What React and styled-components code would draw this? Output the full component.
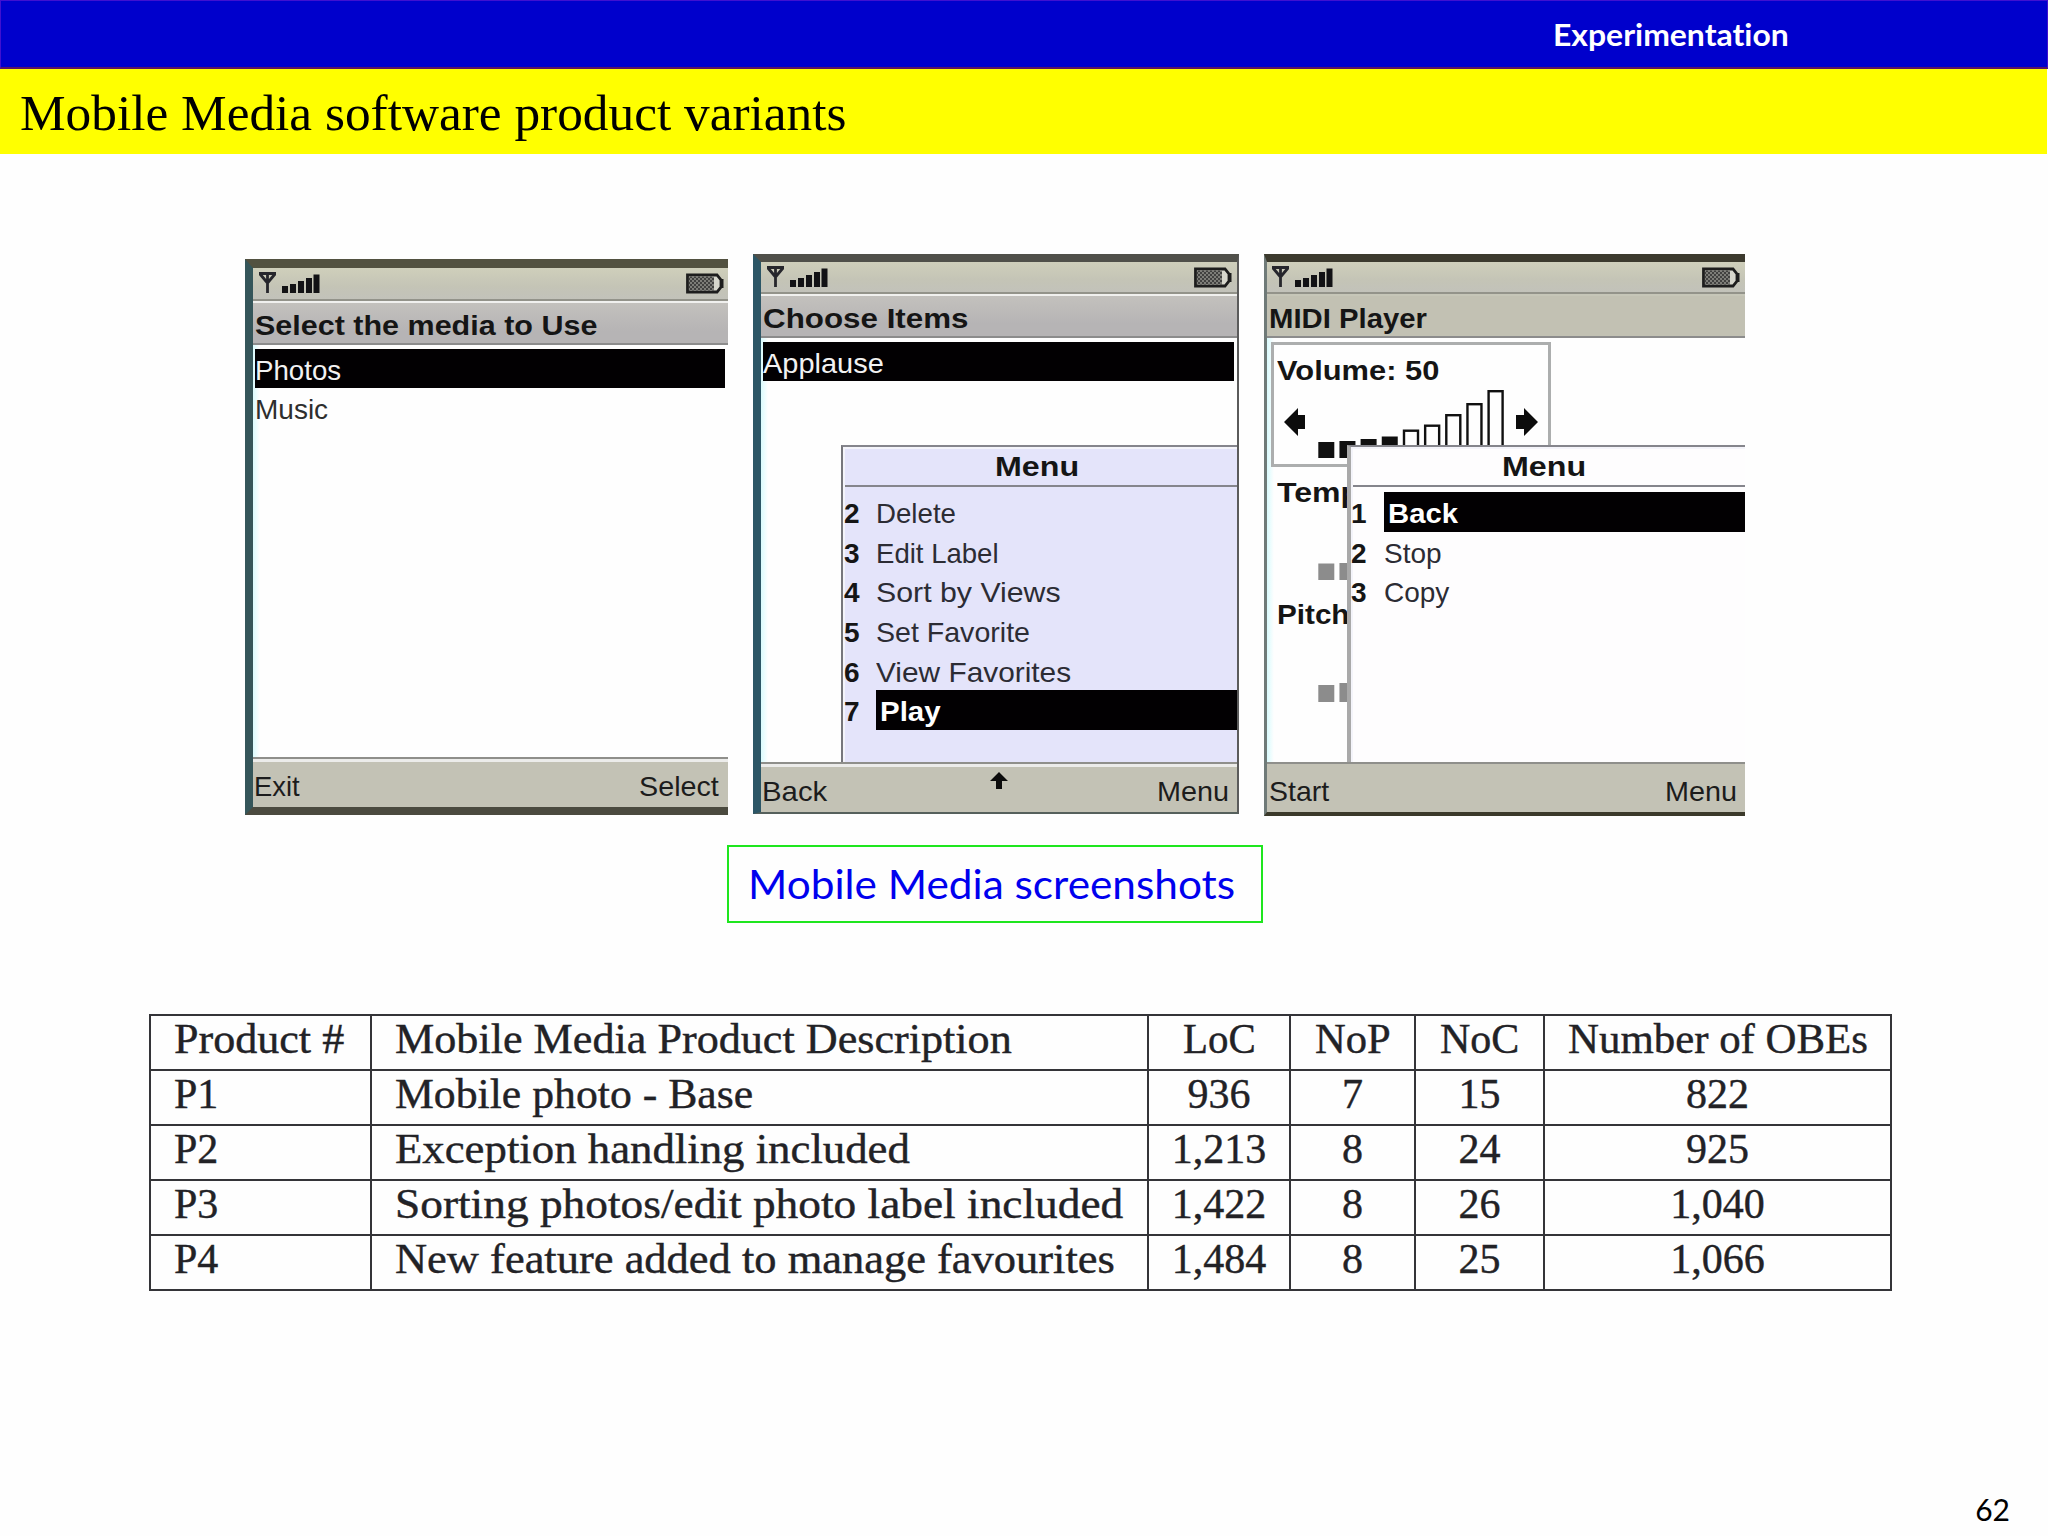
import { useLayoutEffect, useRef, useState } from "react"
import styled, { createGlobalStyle } from "styled-components"

const GlobalStyle = createGlobalStyle`
  body {
    margin: 0;
    background-color: #fefefe;
    font-variant-ligatures: none;
  }

  * {
    box-sizing: border-box;
  }
`

const Slide = styled.main`
  display: flex;
  flex-direction: column;
  width: 2048px;
  height: 1536px;
  overflow: hidden;
  background-color: #fefefe;
`

const TopBar = styled.header`
  display: flex;
  align-items: center;
  justify-content: flex-end;
  height: 69px;
  padding-right: 258px;
  border: 1px solid #4010d0;
  border-bottom: 2px solid #5a1464;
  background-color: #0000cc;
  color: #ffffff;
  font-family: Lato, sans-serif;
  font-size: 30px;
  font-weight: bold;
`

const TitleBar = styled.div`
  display: flex;
  align-items: center;
  height: 85px;
  margin-right: 1px;
  padding: 3px 0 0 20px;
  background-color: #ffff00;
  color: #000000;
  font-family: "Liberation Serif", serif;
  font-size: 51px;
`

const FitBox = styled.span`
  display: inline-block;
  flex-shrink: 0;
  width: ${({ $width }) => $width}px;
  white-space: nowrap;
  text-align: left;
`

const FitInner = styled.span`
  display: inline-block;
  transform-origin: left center;
`

const Phones = styled.section`
  display: flex;
  align-items: flex-start;
  height: 691px;
  padding: 100px 0 0 245px;
`

const Phone = styled.article`
  position: relative;
  display: flex;
  flex-direction: column;
  width: ${({ $width }) => $width}px;
  height: ${({ $height }) => $height}px;
  margin: ${({ $margin }) => $margin};
  border-style: solid;
  border-width: ${({ $borders }) => $borders};
  border-color: ${({ $colors }) => $colors};
  background-color: #fefefe;
  color: #151515;
  font-family: "Liberation Sans", sans-serif;
  font-size: 28px;
  overflow: hidden;
`

const StatusBar = styled.div`
  display: flex;
  justify-content: space-between;
  height: ${({ $height }) => $height}px;
  padding: 4px ${({ $right }) => $right}px 0 ${({ $left }) => $left}px;
  border-bottom: 2px solid #93938a;
  background: linear-gradient(#cfcfbb, #c4c4b6 60%, #c2c2ba);
`

const PhoneTitle = styled.h2`
  display: flex;
  align-items: center;
  height: 44px;
  margin: 0;
  padding: 5px 0 0 ${({ $left }) => $left}px;
  border-top: 2px solid ${({ $plain }) => ($plain ? "#c6c6b8" : "#f0f0ee")};
  border-bottom: 2px solid #8c8c8c;
  background: ${({ $plain }) => ($plain ? "#c2c1b3" : "linear-gradient(#c3c1bd, #b6b4b5 70%)")};
  font-size: 28px;
  font-weight: bold;
`

const PhoneBody = styled.div`
  flex-grow: 1;
  padding: 4px 3px 0 2px;
  background: linear-gradient(to right, #d9fbfd, #fefefe 7px);
`

const ListItem = styled.div`
  height: 39px;
  background-color: ${({ $selected }) => ($selected ? "#020002" : "transparent")};
  color: ${({ $selected }) => ($selected ? "#f2f2f2" : "#2e2e2e")};
  line-height: 43px;
`

const SoftKeys = styled.div`
  display: flex;
  align-items: center;
  justify-content: space-between;
  height: 50px;
  padding: 8px ${({ $right }) => $right}px 0 ${({ $left }) => $left}px;
  border-top: 2px solid #8f8f8b;
  background-color: #c3c2b5;
  box-shadow: inset 0 ${({ $plain }) => ($plain ? 0 : 3)}px #ececea;
  color: #1c1c1c;
`

const UpArrow = styled.svg`
  align-self: flex-start;
  width: 18px;
  height: 18px;
  margin-left: ${({ $shift }) => $shift}px;
`

const Menu = styled.div`
  position: absolute;
  left: ${({ $left }) => $left}px;
  right: 0;
  top: 183px;
  height: 317px;
  border-top: 2px solid #85858c;
  border-left: ${({ $line }) => $line}px solid ${({ $lineColor }) => $lineColor};
  background-color: ${({ $background }) => $background};
  box-shadow: inset 2px 2px #f4f4fa;
`

const MenuTitle = styled.div`
  height: 40px;
  margin-left: 2px;
  padding-left: ${({ $left }) => $left}px;
  border-bottom: 2px solid #85858c;
  font-weight: bold;
  line-height: 40px;
`

const MenuItems = styled.ol`
  display: flex;
  flex-direction: column;
  margin: 0;
  padding: 5px 0 0;
  list-style: none;
`

const MenuItem = styled.li`
  display: flex;
  height: 39.7px;
  line-height: 43px;
`

const MenuNumber = styled.span`
  width: ${({ $width }) => $width}px;
  padding-left: ${({ $left }) => $left}px;
  font-weight: bold;
`

const MenuLabel = styled.span`
  flex-grow: 1;
  height: 39.5px;
  padding-left: ${({ $selected }) => ($selected ? 4 : 0)}px;
  background-color: ${({ $selected }) => ($selected ? "#020002" : "transparent")};
  color: ${({ $selected }) => ($selected ? "#ffffff" : "#2c2c34")};
  font-weight: ${({ $selected }) => ($selected ? "bold" : "normal")};
`

const Control = styled.div`
  width: 280px;
  height: ${({ $framed }) => ($framed ? 125 : 122)}px;
  margin-left: 2px;
  border: ${({ $framed }) => ($framed ? "3px solid #acaeae" : "none")};
  padding-left: ${({ $framed }) => ($framed ? 0 : 3)}px;
`

const ControlLabel = styled.div`
  height: 50px;
  padding-left: 3px;
  font-weight: bold;
  line-height: 52px;
`

const GaugeSvg = styled.svg`
  display: block;
  width: 274px;
  height: 69px;
`

const Caption = styled.div`
  display: flex;
  align-items: center;
  align-self: flex-start;
  width: 536px;
  height: 78px;
  margin-left: 727px;
  padding-left: 19px;
  border: 2px solid #1ee61e;
  color: #0000ee;
  font-family: Lato, sans-serif;
  font-size: 40px;
`

const Table = styled.table`
  width: 1742px;
  margin: 91px 0 0 149px;
  border-collapse: collapse;
  table-layout: fixed;
  color: #222226;
  font-family: "Liberation Serif", serif;
  font-size: 42px;
  -webkit-text-stroke: 0.4px #222226;

  & tr {
    height: 55px;
  }
`

const Col = styled.col`
  width: ${({ $width }) => $width}px;
`

const Cell = styled.td`
  height: 55px;
  padding: 0 0 6px ${({ $center }) => ($center ? 0 : 23)}px;
  border: 2px solid #343438;
  line-height: 47px;
  text-align: ${({ $center }) => ($center ? "center" : "left")};
  white-space: nowrap;
`

const PageNumber = styled.footer`
  margin: auto 38px 9px auto;
  color: #000000;
  font-family: Lato, sans-serif;
  font-size: 30px;
  line-height: 36px;
`

// Stretches or squeezes a line of text so it fills exactly `width` pixels
function Fit({ width, children }) {
  const ref = useRef(null)
  const [scale, setScale] = useState(1)

  useLayoutEffect(() => {
    setScale(width / ref.current.offsetWidth)
  }, [width, children])

  return (
    <FitBox $width={width}>
      <FitInner ref={ref} style={{ transform: `scaleX(${scale})` }}>
        {children}
      </FitInner>
    </FitBox>
  )
}

function Signal() {
  return (
    <svg width="62" height="22" viewBox="0 0 62 22">
      <path d="M1 1.5H18M2 2L9.5 11L17 2M9.5 1V21" fill="none" stroke="#26262c" strokeWidth="2.8" />
      <g fill="#121215">
        <rect x="24" y="14" width="6" height="7" />
        <rect x="32" y="12" width="6" height="9" />
        <rect x="40" y="9" width="6" height="12" />
        <rect x="48" y="6" width="6" height="15" />
        <rect x="55.5" y="2.5" width="6" height="18.5" />
      </g>
    </svg>
  )
}

function Battery() {
  return (
    <svg width="38" height="22" viewBox="0 0 38 22">
      <defs>
        <pattern id="charge" width="4" height="4" patternUnits="userSpaceOnUse">
          <rect width="4" height="4" fill="#7d7d78" />
          <rect width="2" height="2" fill="#414140" />
          <rect x="2" y="2" width="2" height="2" fill="#414140" />
        </pattern>
      </defs>
      <path d="M1.5 3H31L35 8V15L31 20H1.5Z" fill="#d6d6cc" stroke="#1d1d1d" strokeWidth="2.8" />
      <rect x="3" y="4.5" width="25" height="14" fill="url(#charge)" />
      <path d="M34 7H37.5V16H34Z" fill="#1d1d1d" />
    </svg>
  )
}

const volumeTops = [47, 46, 44, 41.5, 34.5, 29.5, 19, 8, -5]

function Gauge({ tops, filled, color, arrows }) {
  return (
    <GaugeSvg viewBox="0 0 274 69" overflow="visible">
      {arrows && (
        <g fill="#0c0c0c">
          <path d="M10 27L24 13V20H31V34H24V41Z" />
          <path d="M264 27L250 13V20H242V34H250V41Z" />
        </g>
      )}
      {tops.map((top, i) =>
        i < filled ? (
          <rect key={i} x={44.3 + i * 21.15} y={top} width="16" height={63 - top} fill={color} />
        ) : (
          <rect
            key={i}
            x={45.4 + i * 21.15}
            y={top + 1.2}
            width="14"
            height={61 - top}
            fill="none"
            stroke={color}
            strokeWidth="2.4"
          />
        )
      )}
    </GaugeSvg>
  )
}

function PhoneMenu({ items, numberWidth, numberLeft, titleLeft, ...box }) {
  return (
    <Menu {...box}>
      <MenuTitle $left={titleLeft}>
        <Fit width={84}>Menu</Fit>
      </MenuTitle>
      <MenuItems>
        {items.map(({ number, label, width, selected }) => (
          <MenuItem key={number}>
            <MenuNumber $width={numberWidth} $left={numberLeft}>
              {number}
            </MenuNumber>
            <MenuLabel $selected={selected}>
              <Fit width={width}>{label}</Fit>
            </MenuLabel>
          </MenuItem>
        ))}
      </MenuItems>
    </Menu>
  )
}

const applauseMenu = [
  { number: 2, label: "Delete", width: 80 },
  { number: 3, label: "Edit Label", width: 123 },
  { number: 4, label: "Sort by Views", width: 185 },
  { number: 5, label: "Set Favorite", width: 154 },
  { number: 6, label: "View Favorites", width: 195 },
  { number: 7, label: "Play", width: 61, selected: true },
]

const playerMenu = [
  { number: 1, label: "Back", width: 70, selected: true },
  { number: 2, label: "Stop", width: 58 },
  { number: 3, label: "Copy", width: 65 },
]

const columns = [221, 777, 142, 125, 129, 347]

const header = [
  ["Product #", 170],
  ["Mobile Media Product Description", 617],
  ["LoC", 73],
  ["NoP", 76],
  ["NoC", 79],
  ["Number of OBEs", 300],
]

const products = [
  ["P1", ["Mobile photo - Base", 358], "936", "7", "15", "822"],
  ["P2", ["Exception handling included", 515], "1,213", "8", "24", "925"],
  ["P3", ["Sorting photos/edit photo label included", 728], "1,422", "8", "26", "1,040"],
  ["P4", ["New feature added to manage favourites", 720], "1,484", "8", "25", "1,066"],
]

export default function App() {
  return (
    <Slide>
      <GlobalStyle />
      <TopBar>
        <Fit width={236}>Experimentation</Fit>
      </TopBar>
      <TitleBar>
        <Fit width={826}>Mobile Media software product variants</Fit>
      </TitleBar>

      <Phones>
        <Phone
          $width={483}
          $height={556}
          $margin="5px 0 0"
          $borders="9px 0 8px 8px"
          $colors="#525140 #525140 #4b4a3f #35565a"
        >
          <StatusBar $height={33} $left={5} $right={4}>
            <Signal />
            <Battery />
          </StatusBar>
          <PhoneTitle $left={2}>
            <Fit width={342}>Select the media to Use</Fit>
          </PhoneTitle>
          <PhoneBody>
            <ListItem $selected>
              <Fit width={86}>Photos</Fit>
            </ListItem>
            <ListItem>
              <Fit width={73}>Music</Fit>
            </ListItem>
          </PhoneBody>
          <SoftKeys $left={1} $right={9}>
            <Fit width={46}>Exit</Fit>
            <Fit width={80}>Select</Fit>
          </SoftKeys>
        </Phone>

        <Phone
          $width={486}
          $height={560}
          $margin="0 0 0 25px"
          $borders="8px 2px 2px 8px"
          $colors="#50504a #5b5b5b #55605c #2c5666"
        >
          <StatusBar $height={32} $left={5} $right={5}>
            <Signal />
            <Battery />
          </StatusBar>
          <PhoneTitle $left={2}>
            <Fit width={206}>Choose Items</Fit>
          </PhoneTitle>
          <PhoneBody>
            <ListItem $selected>
              <Fit width={121}>Applause</Fit>
            </ListItem>
          </PhoneBody>
          <SoftKeys $left={1} $right={8}>
            <Fit width={65}>Back</Fit>
            <UpArrow viewBox="0 0 18 18" $shift={13}>
              <path d="M9 0L18 9H12V17H6V9H0Z" fill="#0c0c0c" />
            </UpArrow>
            <Fit width={72}>Menu</Fit>
          </SoftKeys>
          <PhoneMenu
            items={applauseMenu}
            numberWidth={33}
            numberLeft={1}
            titleLeft={150}
            $left={80}
            $line={2}
            $lineColor="#77777c"
            $background="#e4e4fa"
          />
        </Phone>

        <Phone
          $width={481}
          $height={562}
          $margin="0 0 0 25px"
          $borders="8px 0 4px 3px"
          $colors="#3c3a2e #3c3a2e #3b392a #6f7a78"
        >
          <StatusBar $height={32} $left={4} $right={5}>
            <Signal />
            <Battery />
          </StatusBar>
          <PhoneTitle $left={2} $plain>
            <Fit width={158}>MIDI Player</Fit>
          </PhoneTitle>
          <PhoneBody>
            <Control $framed>
              <ControlLabel>
                <Fit width={162}>Volume: 50</Fit>
              </ControlLabel>
              <Gauge tops={volumeTops} filled={4} color="#101010" arrows />
            </Control>
            <Control>
              <ControlLabel>
                <Fit width={103}>Tempo</Fit>
              </ControlLabel>
              <Gauge tops={[46.5, 46]} filled={2} color="#8c8c8c" />
            </Control>
            <Control>
              <ControlLabel>
                <Fit width={72}>Pitch</Fit>
              </ControlLabel>
              <Gauge tops={[46, 44]} filled={2} color="#8c8c8c" />
            </Control>
          </PhoneBody>
          <SoftKeys $left={2} $right={8} $plain>
            <Fit width={60}>Start</Fit>
            <Fit width={72}>Menu</Fit>
          </SoftKeys>
          <PhoneMenu
            items={playerMenu}
            numberWidth={33}
            numberLeft={0}
            titleLeft={149}
            $left={80}
            $line={4}
            $lineColor="#a9a9a9"
            $background="#fefdfe"
          />
        </Phone>
      </Phones>

      <Caption>
        <Fit width={487}>Mobile Media screenshots</Fit>
      </Caption>

      <Table>
        <colgroup>
          {columns.map((width, i) => (
            <Col key={i} $width={width} />
          ))}
        </colgroup>
        <tbody>
          <tr>
            {header.map(([text, width], i) => (
              <Cell key={text} $center={i > 1}>
                <Fit width={width}>{text}</Fit>
              </Cell>
            ))}
          </tr>
          {products.map(([id, [description, width], ...counts]) => (
            <tr key={id}>
              <Cell>{id}</Cell>
              <Cell>
                <Fit width={width}>{description}</Fit>
              </Cell>
              {counts.map((count, i) => (
                <Cell key={i} $center>
                  {count}
                </Cell>
              ))}
            </tr>
          ))}
        </tbody>
      </Table>

      <PageNumber>62</PageNumber>
    </Slide>
  )
}
